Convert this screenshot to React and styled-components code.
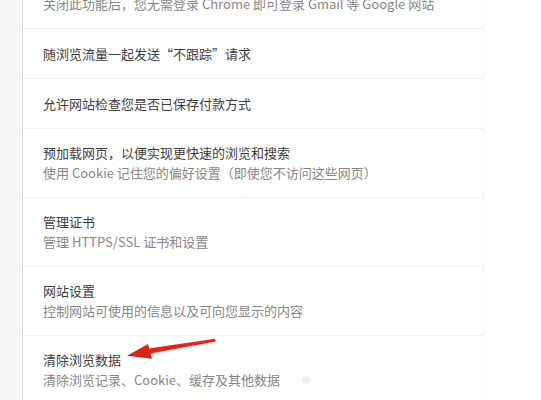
import styled, { createGlobalStyle } from "styled-components";

const GlobalStyle = createGlobalStyle`
  html, body {
    margin: 0;
    padding: 0;
    background: #ffffff;
  }
  body {
    font-family: "Noto Sans CJK SC", "Noto Sans", "Liberation Sans", sans-serif;
  }
`;

const Page = styled.div`
  position: relative;
  width: 541px;
  height: 400px;
  overflow: hidden;
  display: flex;
  background: #ffffff;
`;

const Gutter = styled.div`
  width: 22px;
  flex: none;
  background: #f7f7f7;
  border-right: 1px solid #e2e2e2;
`;

const Card = styled.div`
  width: 460px;
  flex: none;
  background: #ffffff;
  border-right: 1px solid #f4f4f4;
`;

const List = styled.div`
  margin-top: -21px;
  display: flex;
  flex-direction: column;
`;

const Row = styled.div`
  display: flex;
  flex-direction: column;
  padding: ${({ $two }) => ($two ? "14px 20px 14px" : "15px 20px 14px")};
  border-bottom: 1px solid #efefef;
`;

const Title = styled.div`
  font-size: 13px;
  line-height: 20px;
  color: #3d3d3d;
  white-space: nowrap;
`;

const Sub = styled.div`
  font-size: 13px;
  line-height: 20px;
  color: #878787;
  white-space: nowrap;
`;

const Overlay = styled.svg`
  position: absolute;
  top: 0;
  left: 0;
  pointer-events: none;
`;

const rows = [
  { sub: "关闭此功能后，您无需登录 Chrome 即可登录 Gmail 等 Google 网站", top: true },
  { title: "随浏览流量一起发送“不跟踪”请求" },
  { title: "允许网站检查您是否已保存付款方式" },
  { title: "预加载网页，以便实现更快速的浏览和搜索", sub: "使用 Cookie 记住您的偏好设置（即使您不访问这些网页）" },
  { title: "管理证书", sub: "管理 HTTPS/SSL 证书和设置" },
  { title: "网站设置", sub: "控制网站可使用的信息以及可向您显示的内容" },
  { title: "清除浏览数据", sub: "清除浏览记录、Cookie、缓存及其他数据" },
];

function RedArrow() {
  return (
    <Overlay width="541" height="400" viewBox="0 0 541 400">
      <circle cx="306" cy="380" r="4" fill="#efefef" />
      <polygon points="215,338.6 215.8,341.6 150,354 149,348.4" fill="#e0938f" opacity="0.35" transform="translate(0.5,1.2)" />
      <polygon points="215,338.8 215.6,341.4 150,353.4 149,348.6" fill="#d42a22" />
      <polygon points="127,355.8 148,344 152,358.8" fill="#d8221a" />
    </Overlay>
  );
}

export default function App() {
  return (
    <>
      <GlobalStyle />
      <Page>
        <Gutter />
        <Card>
          <List>
            {rows.map((r, i) => (
              <Row key={i} $two={!!(r.title && r.sub)}>
                {r.title && <Title>{r.title}</Title>}
                {r.sub && <Sub>{r.sub}</Sub>}
              </Row>
            ))}
          </List>
        </Card>
        <RedArrow />
      </Page>
    </>
  );
}
